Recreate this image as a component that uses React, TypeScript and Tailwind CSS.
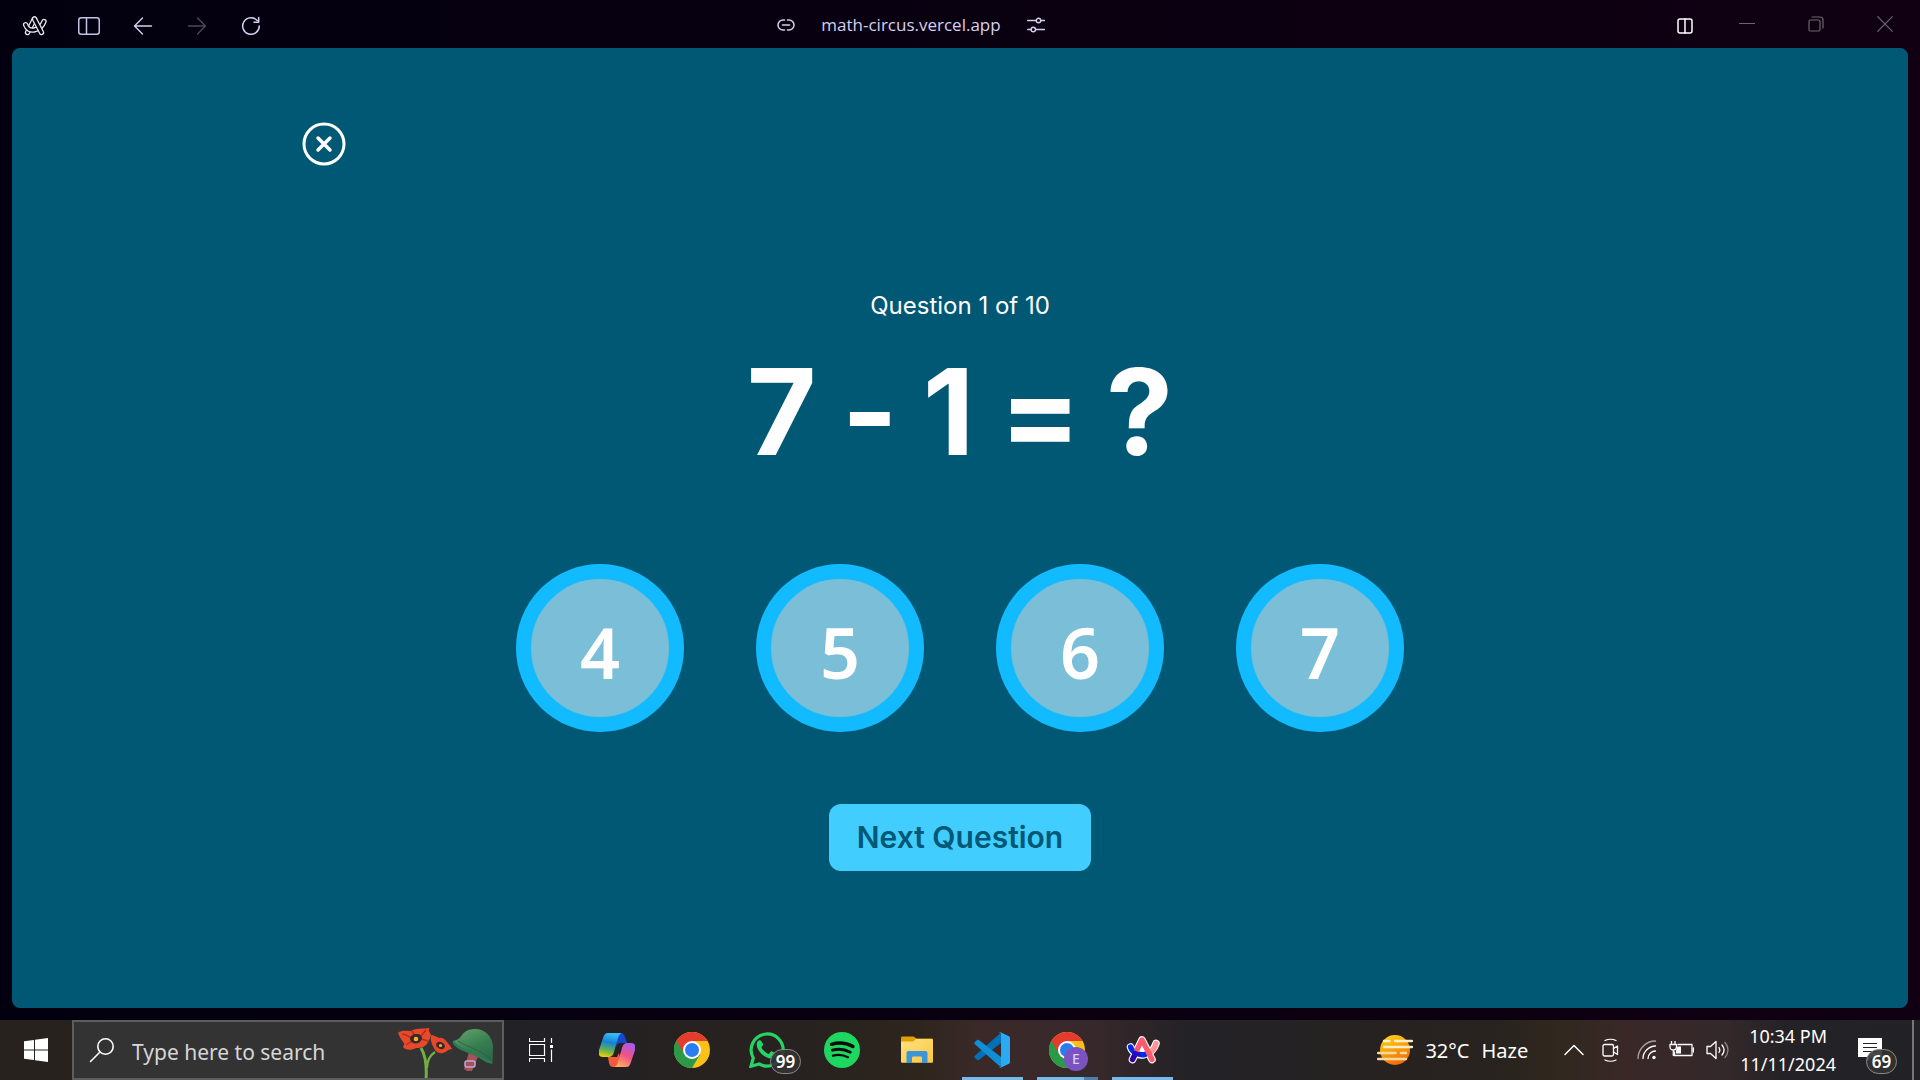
import React from "react";

type IconProps = { children: React.ReactNode; w: number; h: number; className?: string };

function Icon({ children, w, h, className = "" }: IconProps) {
  return (
    <svg
      width={w}
      height={h}
      viewBox={`0 0 ${w} ${h}`}
      fill="none"
      stroke="currentColor"
      strokeLinecap="round"
      strokeLinejoin="round"
      aria-hidden="true"
      className={`shrink-0 ${className}`}
    >
      {children}
    </svg>
  );
}

/* ---------- Title bar ---------- */

const ARC_STROKES = ["M5.500 17.500 12.500 4", "M3.600 9.700C5 14 8.500 15.700 12 15c5-1 8.500-4.500 10-8.500", "M12.500 4 19.500 17.500"];

function ArcOutline() {
  return (
    <Icon w={26} h={22}>
      {ARC_STROKES.map((d) => (
        <g key={d}>
          <path d={d} stroke="#e9e8ee" strokeWidth="5.400" />
          <path d={d} stroke="#03000f" strokeWidth="2.800" />
        </g>
      ))}
    </Icon>
  );
}

function TitleButton({ label, children, wide = false }: { label: string; children: React.ReactNode; wide?: boolean }) {
  return (
    <button
      type="button"
      aria-label={label}
      className={`flex h-12 items-center justify-center ${wide ? "w-[69px]" : "w-[54px]"}`}
    >
      {children}
    </button>
  );
}

function TitleBar() {
  return (
    <header className="grid h-12 grid-cols-[1fr_auto_1fr] items-center text-[#d6d0f0]">
      <nav className="flex pt-0.5 pl-2" aria-label="Browser navigation">
        <TitleButton label="Arc menu">
          <ArcOutline />
        </TitleButton>
        <TitleButton label="Toggle sidebar">
          <Icon w={22} h={18} className="text-[#c4c2e4]">
            <rect x="0.750" y="0.750" width="20.500" height="16.500" rx="2.500" strokeWidth="1.500" />
            <path d="M8.500 1v16" strokeWidth="1.500" />
          </Icon>
        </TitleButton>
        <TitleButton label="Back">
          <Icon w={20} h={18}>
            <path d="M18.500 9H1.500M9.500 1 1.500 9l8 8" strokeWidth="1.400" />
          </Icon>
        </TitleButton>
        <TitleButton label="Forward">
          <Icon w={20} h={18} className="text-[#4d4859]">
            <path d="M1.500 9h17M10.500 1l8 8-8 8" strokeWidth="1.400" />
          </Icon>
        </TitleButton>
        <TitleButton label="Reload">
          <Icon w={20} h={20}>
            <path d="M16.200 4.500A8.300 8.300 0 1 0 18.300 10" strokeWidth="1.500" />
            <path d="M17.700 1.500v4.700h-4.700" strokeWidth="1.500" />
          </Icon>
        </TitleButton>
      </nav>

      <div className="mr-[98px] flex items-center gap-[26px]">
        <button type="button" aria-label="Copy link">
          <Icon w={18} h={12}>
            <path d="M7.500 1H6a5 5 0 0 0 0 10h1.500M10.500 1H12a5 5 0 0 1 0 10h-1.500M5.500 6h7" strokeWidth="1.500" />
          </Icon>
        </button>
        <button type="button" className="font-['Open_Sans',sans-serif] text-[17px] leading-6">
          math-circus.vercel.app
        </button>
        <button type="button" aria-label="Site settings">
          <Icon w={18} h={16}>
            <path d="M.700 3.500h8.300M14 3.500h3.500M.700 12.500h3M9 12.500h8.500" strokeWidth="1.400" />
            <circle cx="11.500" cy="3.500" r="2.200" strokeWidth="1.400" />
            <circle cx="6.300" cy="12.500" r="2.200" strokeWidth="1.400" />
          </Icon>
        </button>
      </div>

      <div className="flex justify-end pr-px pb-0.5 text-[#6d6670]">
        <TitleButton label="Split view">
          <Icon w={16} h={20} className="text-white">
            <rect x="1" y="5" width="14" height="14" rx="2" strokeWidth="1.500" />
            <path d="M8 5v14" strokeWidth="1.500" />
          </Icon>
        </TitleButton>
        <TitleButton label="Minimize" wide>
          <Icon w={16} h={16}>
            <path d="M.500 7.500h15" strokeWidth="1.200" />
          </Icon>
        </TitleButton>
        <TitleButton label="Restore" wide>
          <Icon w={16} h={16}>
            <rect x="1" y="4" width="11" height="11" rx="1.500" strokeWidth="1.200" />
            <path d="M4 1h8a3 3 0 0 1 3 3v8" strokeWidth="1.200" />
          </Icon>
        </TitleButton>
        <TitleButton label="Close window" wide>
          <Icon w={16} h={16}>
            <path d="M.700.700l14.600 14.600M15.300.700.700 15.300" strokeWidth="1.200" />
          </Icon>
        </TitleButton>
      </div>
    </header>
  );
}

/* ---------- Quiz ---------- */

const EQUATION = ["7", "-", "1", "=", "?"];
const ANSWERS = [4, 5, 6, 7];

function Quiz() {
  return (
    <main className="mx-3 mb-3 flex flex-1 flex-col items-center rounded-lg bg-[#005875] font-[Inter,sans-serif] text-white">
      <div className="w-full max-w-[1320px] pt-[74px]">
        <button type="button" aria-label="Quit quiz" className="ml-0.5 flex">
          <Icon w={44} h={44}>
            <circle cx="22" cy="22" r="20" strokeWidth="3" />
            <path d="m16 16 12 12M28 16 16 28" strokeWidth="3.500" />
          </Icon>
        </button>
      </div>
      <p className="mt-[122px] text-2xl leading-9">Question 1 of 10</p>
      <h1 className="mt-2 flex gap-[25px] text-[120px] leading-[160px] font-bold">
        {EQUATION.map((token) => (
          <React.Fragment key={token}>
            <span>{token}</span>{" "}
          </React.Fragment>
        ))}
      </h1>
      <div className="mt-[72px] flex flex-wrap justify-center gap-[72px]">
        {ANSWERS.map((n) => (
          <button
            key={n}
            type="button"
            className="flex size-[168px] items-center justify-center rounded-full border-[15px] border-[#12bbff] bg-[#7abed7] pt-2 font-['Noto_Sans',sans-serif] text-[70px] leading-none font-semibold"
          >
            {n}
          </button>
        ))}
      </div>
      <button
        type="button"
        className="mt-[72px] rounded-xl bg-[#42cdff] px-7 py-[15px] text-[30px] leading-[37px] font-semibold text-[#005875]"
      >
        Next Question
      </button>
    </main>
  );
}

/* ---------- Taskbar ---------- */

function Poppies() {
  return (
    <svg width="54" height="50" viewBox="0 0 54 50" aria-hidden="true" className="shrink-0">
      <g fill="none" stroke="#72b043" strokeWidth="3">
        <path d="M23 20c5 8 6 18 5 32" />
        <path d="M37 24c-6 4-8 9-8 16" strokeWidth="2.200" />
      </g>
      <path d="M0 5C3 2 8 3 13 3c4-3 11-2 18.500-3C30 3 32 4 33 7c-1 2-1 5-3 7-2 5-7 6-12 6-5 3-11 2-13-1 1-2 2-3 0-5C3 11 1 8 0 5Z" fill="#e64a2b" />
      <path d="M4 6c4 0 6 2 9 4M14 3l3 5M28 2l-5 6M30 13l-7-2M8 17l6-4" stroke="#b52c1c" strokeWidth="1.500" fill="none" />
      <path d="M12 11c0-3 3-5 7-5 3 0 5 2 5 4.500-1 3-3 5-6.500 5-3 0-5-2-5.500-4.500Z" fill="#38272d" />
      <circle cx="18" cy="11" r="2.300" fill="#e9b52b" />
      <path d="M33 7c3 0 6 2 8 3 3-1 6 1 8 4 2 2 4 5 5 7-4 0-5 3-9 4-5 1-8-2-9-5-2-3-4-8-3-13Z" fill="#e5482b" />
      <ellipse cx="42.500" cy="17.500" rx="4.500" ry="3.300" fill="#38272d" transform="rotate(25 42.500 17.500)" />
      <circle cx="42.500" cy="17.500" r="1.600" fill="#e9b52b" />
    </svg>
  );
}

function Helmet() {
  return (
    <svg width="42" height="44" viewBox="0 0 42 44" aria-hidden="true" className="shrink-0">
      <defs>
        <linearGradient id="helmet" x1="0.300" y1="0" x2="0.800" y2="1">
          <stop offset="0" stopColor="#5a9e68" />
          <stop offset="0.500" stopColor="#387d50" />
          <stop offset="1" stopColor="#28694a" />
        </linearGradient>
      </defs>
      <path d="m17 23 9 5-6 14h-5l-3-2Z" fill="#a45355" />
      <rect x="13" y="32" width="10" height="6" rx="2" fill="none" stroke="#c3a6e4" strokeWidth="1.500" />
      <path d="M1 12c5-1 7-3 9-6 3-4 7-6 13-6 10 0 17 7 18 17l-.500 17.500C35 35 31 31 24 27 15 23 3 20 1 12Z" fill="url(#helmet)" />
      <path d="M1.500 13C4 19 13 21 23 25c8 4 12 8 17 8.500" fill="none" stroke="#2f7a50" strokeWidth="2.500" />
      <path d="M6 12c6 4 12 6 19 9 6 3 10 6 14 9" fill="none" stroke="#24603f" strokeWidth="0.800" />
    </svg>
  );
}

function TaskViewIcon() {
  return (
    <svg width="26" height="24" viewBox="0 0 26 24" fill="none" stroke="white" strokeWidth="1.200" aria-hidden="true">
      <path d="M.500 0v3.500h15V0M.500 24v-3.500h15V24M.500 6.500h15v11H.500zM22.500 0v5M22.500 11.500V24" />
      <path d="M21 7h3v3h-3z" fill="white" stroke="none" />
    </svg>
  );
}

function CopilotIcon() {
  return (
    <svg width="36" height="34" viewBox="0 0 36 34" aria-hidden="true">
      <defs>
        <linearGradient id="cpA" x1="0.300" y1="0" x2="0.100" y2="1">
          <stop offset="0" stopColor="#38b9f2" />
          <stop offset="0.350" stopColor="#1483d5" />
          <stop offset="0.700" stopColor="#6bb34a" />
          <stop offset="1" stopColor="#ffd200" />
        </linearGradient>
        <linearGradient id="cpB" x1="0.800" y1="0" x2="0.300" y2="1">
          <stop offset="0" stopColor="#a45bf7" />
          <stop offset="0.500" stopColor="#ee5188" />
          <stop offset="1" stopColor="#ffb05c" />
        </linearGradient>
      </defs>
      <path d="M18 0h4c2 0 3 1 4 4l2 6h-6c-3 0-4 1-5 4Z" fill="#1448cf" />
      <path d="M9 24h9l2-4 2 10c-1 3-3 4-5 4h-3c-2 0-3-1-4-4Z" fill="#f45b3d" />
      <path d="M9 0h15c-3 0-4 2-5 5l-4 14c-1 4-3 5-6 5H4c-4 0-5-3-4-7L4 5c1-3 2-5 5-5Z" fill="url(#cpA)" />
      <path d="M27 34H14c3 0 4-2 5-5l4-14c1-4 3-5 6-5h3c4 0 5 3 4 7l-4 12c-1 3-2 5-5 5Z" fill="url(#cpB)" />
    </svg>
  );
}

function ChromeIcon() {
  return (
    <svg width="36" height="36" viewBox="0 0 36 36" aria-hidden="true">
      <circle cx="18" cy="18" r="18" fill="#fbc116" />
      <path d="M18 18 2.400 9A18 18 0 0 0 18 36l8-13.500Z" fill="#2a9a48" />
      <path d="M18 9h15.600A18 18 0 0 0 2.400 9l7.800 13.500L18 18Z" fill="#e33b2e" />
      <path d="M2.400 9A18 18 0 0 0 2 26l8.200-3.500Z" fill="#2a9a48" />
      <circle cx="18" cy="18" r="9" fill="white" />
      <circle cx="18" cy="18" r="7" fill="#2b7cf0" />
    </svg>
  );
}

function WhatsAppIcon() {
  return (
    <svg width="36" height="36" viewBox="0 0 36 36" aria-hidden="true">
      <path d="M2 34.200 4.300 26A16 16 0 1 1 10.400 32Z" fill="none" stroke="#25d366" strokeWidth="3.200" />
      <path
        d="M12.300 9.200c-.500-1-1-.900-1.600-.900-1.500 0-3 1.700-3 4.300 0 6 7.700 13.800 14.600 14 2.500 0 5-1.700 5-4.300 0-.700-3.800-2.700-4.700-3-1.300-.200-2 2.500-3 2.600-2.100-.300-6.300-4-7-6.500.100-1 1.800-2 1.600-3.200Z"
        fill="#25d366"
      />
    </svg>
  );
}

function SpotifyIcon() {
  return (
    <svg width="36" height="36" viewBox="0 0 36 36" aria-hidden="true">
      <circle cx="18" cy="18" r="18" fill="#1ed760" />
      <g fill="none" stroke="#0b0b0b" strokeLinecap="round">
        <path d="M7.500 12.300c7-2 15-1.400 21.500 2.200" strokeWidth="3.400" />
        <path d="M8.300 18.200c6-1.700 12.500-1 18 2" strokeWidth="2.800" />
        <path d="M9 23.600c5-1.300 10.500-.800 15 1.700" strokeWidth="2.300" />
      </g>
    </svg>
  );
}

function ExplorerIcon() {
  return (
    <svg width="32" height="28" viewBox="0 0 32 28" aria-hidden="true">
      <defs>
        <linearGradient id="folder" x1="0" y1="0" x2="1" y2="1">
          <stop offset="0" stopColor="#ffe083" />
          <stop offset="1" stopColor="#f9c842" />
        </linearGradient>
      </defs>
      <path d="M0 7V2c0-1 .500-1.500 1.500-1.500H12c1 0 3 2 4 2h14.500c1 0 1.500.500 1.500 1.500v5Z" fill="#e0a000" />
      <path d="M0 5.500h12l3-2.500h15.500c1 0 1.500.500 1.500 1.500v21c0 .800-.500 1.300-1.300 1.300H1.300c-.800 0-1.300-.500-1.300-1.300Z" fill="url(#folder)" />
      <path d="M7.500 15h17c1.200 0 2 .800 2 2v10H21v-5c0-1-.500-1.500-1.500-1.500h-7c-1 0-1.500.500-1.500 1.500v5H5.500V17c0-1.200.800-2 2-2Z" fill="#3d95d8" />
    </svg>
  );
}

function VSCodeIcon() {
  return (
    <svg width="36" height="36" viewBox="0 0 36 36" aria-hidden="true">
      <path d="M26.500 1 .900 23.800c-.700.600-.700 1.600 0 2.200l2 1.800c.600.500 1.300.500 1.900.100L29 9.500Z" fill="#0070b8" />
      <path d="M26.500 35 .900 12.200c-.700-.600-.700-1.600 0-2.200l2-1.800c.600-.500 1.300-.500 1.900-.100L29 26.500Z" fill="#118fd6" />
      <path d="M26.500 35.800c-.800.300-1.600 0-2.200-.600.900.800 2.700.200 2.700-1.200V2c0-1.400-1.800-2-2.700-1.200.600-.600 1.400-.900 2.200-.600l8 3.700c.900.400 1.500 1.200 1.500 2.200v23.800c0 1-.600 1.800-1.500 2.200Z" fill="#2aaaf3" />
    </svg>
  );
}

function ArcIcon() {
  return (
    <svg width="34" height="30" viewBox="0 0 34 30" fill="none" strokeLinecap="round" strokeLinejoin="round" aria-hidden="true" className="ml-0.5">
      <g stroke="white" strokeWidth="7.600">
        <path d="M6.500 24.500 16 5l10 19.500" />
        <path d="M4.500 12c2 6 8 9 14 7.500 6-1.500 10-6 11.500-11" />
      </g>
      <path d="M30 8.500c-1 4-3.500 7.500-7 9.500" stroke="#ff9396" strokeWidth="5.400" />
      <path d="m6.500 24.500 3-6" stroke="#2e00a5" strokeWidth="5.400" />
      <path d="M4.500 12C6.500 17.500 12 20.500 19 19.500" stroke="#0029e8" strokeWidth="5.400" />
      <path d="M10.500 16 16 5l10 19.500" stroke="#fb5b6c" strokeWidth="5.400" />
      <path d="m8.500 17.500 3.500 1.500" stroke="#2a0bbd" strokeWidth="4" />
      <path d="m13.300 16 2.700-5 2.700 5Z" fill="white" />
    </svg>
  );
}

function CountBadge({ children, className = "" }: { children: React.ReactNode; className?: string }) {
  return (
    <span
      className={`absolute top-[29px] flex h-[25px] w-[31px] items-center justify-center rounded-full border border-[#8a8a8a] bg-[#333333]/90 text-[17px] leading-none font-semibold ${className}`}
    >
      {children}
    </span>
  );
}

function TaskButton({ label, running = false, children }: { label: string; running?: boolean; children: React.ReactNode }) {
  return (
    <button
      type="button"
      aria-label={label}
      className={`relative flex h-[60px] w-[75px] items-center justify-center ${
        running ? "after:absolute after:bottom-0 after:left-[8px] after:h-[3px] after:w-[61px] after:bg-[#76b9ed]" : ""
      }`}
    >
      {children}
    </button>
  );
}

function Taskbar() {
  return (
    <footer className="flex h-[60px] items-center bg-[linear-gradient(90deg,#28221e_0%,#28221e_18%,#222126_26%,#222126_30%,#27221f_36%,#27221f_42%,#2e261d_48%,#3a2928_51%,#37282b_57%,#232226_62%,#242224_67%,#272220_72%,#28231f_78%,#30281e_81%,#3a2828_85%,#33282a_90%,#242226_93%,#222226_100%)] font-['Noto_Sans',sans-serif] text-white">
      <button type="button" aria-label="Start" className="flex h-full w-[72px] items-center justify-center">
        <svg width="24" height="24" viewBox="0 0 24 24" fill="white" aria-hidden="true">
          <path d="M0 3.300 10 1.900v9.600H0ZM11 1.700 24 0v11.500H11ZM0 12.500h10v9.600L0 20.700ZM11 12.500h13V24l-13-1.700Z" />
        </svg>
      </button>

      <label className="flex h-full w-[432px] items-center border-2 border-[#5d5d5d] bg-[#333333] pl-[15px]">
        <Icon w={26} h={26}>
          <circle cx="16.500" cy="9.500" r="7.700" strokeWidth="1.600" />
          <path d="M11 15 1.500 24.500" strokeWidth="1.600" />
        </Icon>
        <input
          type="text"
          aria-label="Search"
          placeholder="Type here to search"
          className="ml-[17px] min-w-0 flex-1 bg-transparent pt-1 text-[21px] leading-7 outline-none placeholder:text-[#d6d6d6]"
        />
        <span className="flex items-end self-end">
          <Poppies />
          <span className="mr-2 mb-[5px] block">
            <Helmet />
          </span>
        </span>
      </label>

      <TaskButton label="Task view"><TaskViewIcon /></TaskButton>
      <TaskButton label="Copilot"><CopilotIcon /></TaskButton>
      <TaskButton label="Chrome"><ChromeIcon /></TaskButton>
      <TaskButton label="WhatsApp, 99 notifications">
        <WhatsAppIcon />
        <CountBadge className="left-[41px]">99</CountBadge>
      </TaskButton>
      <TaskButton label="Spotify"><SpotifyIcon /></TaskButton>
      <TaskButton label="File Explorer"><ExplorerIcon /></TaskButton>
      <TaskButton label="Visual Studio Code" running><VSCodeIcon /></TaskButton>
      <TaskButton label="Chrome, profile E" running>
        <ChromeIcon />
        <span className="absolute top-[27px] left-[35px] flex size-6 items-center justify-center rounded-full bg-[#7b53c0] text-sm leading-none font-medium text-[#dccdf2]">E</span>
        <span className="absolute right-[6px] bottom-0 z-10 h-[3px] w-[14px] bg-[#4f7ea6]" />
      </TaskButton>
      <TaskButton label="Arc" running><ArcIcon /></TaskButton>

      <div className="ml-auto flex h-full items-center">
        <button type="button" className="flex items-center gap-3 text-xl leading-7">
          <svg width="36" height="32" viewBox="0 0 36 32" fill="none" aria-hidden="true">
            <defs>
              <linearGradient id="sun" x1="0.300" y1="0" x2="0.700" y2="1">
                <stop offset="0" stopColor="#ffcf12" />
                <stop offset="1" stopColor="#f0660a" />
              </linearGradient>
            </defs>
            <circle cx="18" cy="16" r="15" fill="url(#sun)" />
            <g strokeWidth="2.400" strokeLinecap="round" stroke="#fdf0c8">
              <path d="M7 7h5.500M18 7h17M7 13h28" />
              <path d="M1 19h17.500M24 19h5M1 25h28" stroke="#f3d9a0" />
            </g>
          </svg>
          <span className="flex gap-3 pt-0.5">
            <span>32°C</span>
            <span>Haze</span>
          </span>
        </button>
        <div className="ml-9 flex items-center">
          <button type="button" aria-label="Show hidden icons" className="mr-[18px]">
            <Icon w={20} h={12}><path d="m1 10.500 9-9 9 9" strokeWidth="1.500" /></Icon>
          </button>
          <button type="button" aria-label="Meet now" className="mr-[17px]">
            <Icon w={18} h={24}>
              <rect x="1" y="6.500" width="10.500" height="11.500" rx="1.500" strokeWidth="1.300" />
              <path d="m11.500 10.500 4-2.500v8.500l-4-2.500M3 2.500c3-1.500 8-1.500 11 0M3 22c3 1.500 8 1.500 11 0" strokeWidth="1.300" />
            </Icon>
          </button>
          <button type="button" aria-label="Wi-Fi" className="mr-3">
            <Icon w={20} h={20}>
              <path d="M1 18.500C1 9 9 1 18.500 1" strokeWidth="1.300" stroke="#a9a2a2" />
              <path d="M6 18.500C6 12 12 6 18.500 6M11 18.500c0-4 3.500-7.500 7.500-7.500" strokeWidth="1.300" />
              <circle cx="17" cy="17.500" r="1.700" fill="white" stroke="none" />
            </Icon>
          </button>
          <button type="button" aria-label="Battery charging" className="mr-3">
            <Icon w={25} h={18}>
              <path d="M9 3.500h14v11H5.500V11M24.500 7v4" strokeWidth="1.300" />
              <path d="M1 3.500h6.500v2.500c0 2-1.500 3-3.200 3S1 8 1 6ZM2.500 0v3M6 0v3M4.300 9v5.500" strokeWidth="1.300" />
              <path d="M8.500 5.500h3.500v7H7v-3Z" fill="white" stroke="none" />
            </Icon>
          </button>
          <button type="button" aria-label="Volume">
            <Icon w={24} h={20}>
              <path d="M1 6.500h3.500L10 1.500v17l-5.500-5H1Z" strokeWidth="1.300" />
              <path d="M13 7.500c1 1.500 1 3.500 0 5M16 5c2.500 3 2.500 7 0 10" strokeWidth="1.300" />
              <path d="M19 2.500c4 4.500 4 10.500 0 15" strokeWidth="1.300" stroke="#8f898b" />
            </Icon>
          </button>
        </div>
        <button type="button" className="ml-[10px] text-center text-[18px] leading-7 whitespace-nowrap">
          <time dateTime="2024-11-11T22:34">
            10:34 PM
            <br />
            11/11/2024
          </time>
        </button>
        <button type="button" aria-label="69 notifications" className="relative ml-[10px] flex h-full w-[66px] items-center">
          <svg width="24" height="24" viewBox="0 0 24 24" aria-hidden="true" className="ml-3">
            <path d="M0 0h24v19H14l-5 5v-5H0Z" fill="white" />
            <path d="M5 5.500h14M5 9.500h14M5 13.500h14" stroke="#232226" strokeWidth="1.200" />
          </svg>
          <CountBadge className="left-[20px]">69</CountBadge>
        </button>
        <span className="mr-1.5 h-full w-0.5 bg-[#77777a]" />
      </div>
    </footer>
  );
}

export default function App() {
  return (
    <div className="flex min-h-screen flex-col bg-[linear-gradient(90deg,#02000f_0%,#090010_50%,#100012_100%)]">
      <TitleBar />
      <Quiz />
      <Taskbar />
    </div>
  );
}
